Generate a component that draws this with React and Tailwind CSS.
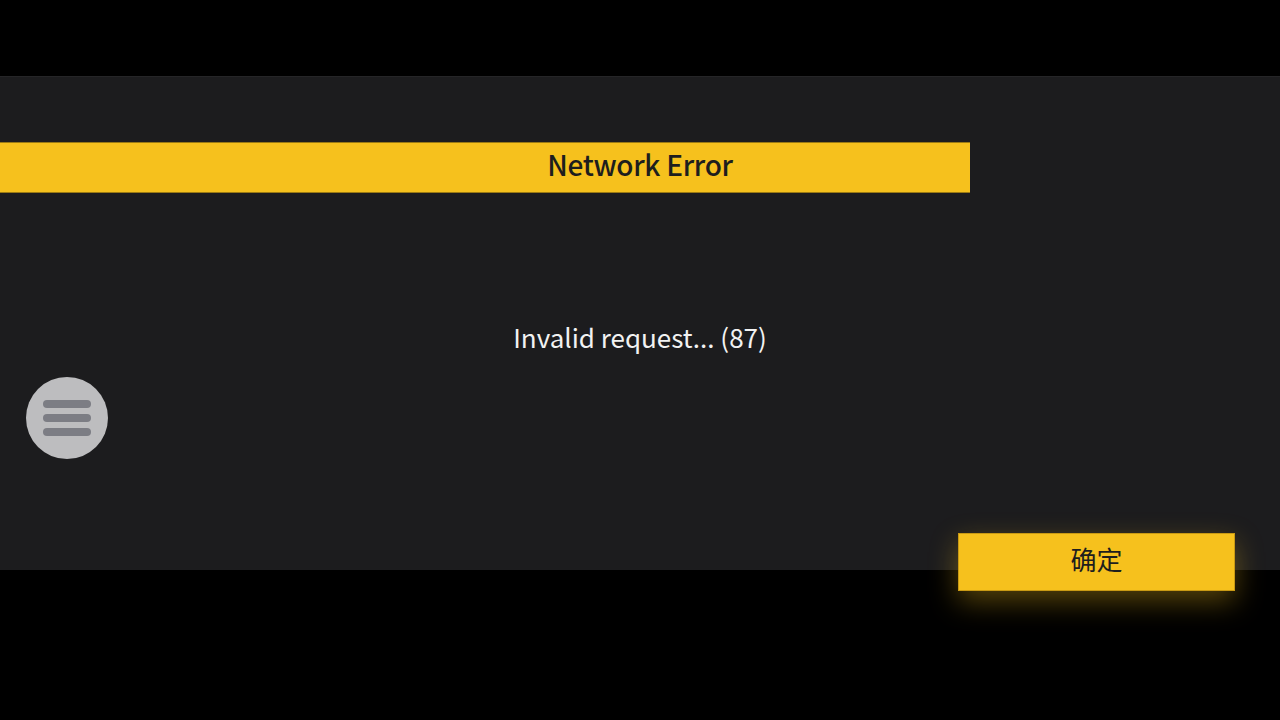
export default function App() {
  const font = { fontFamily: '"Noto Sans CJK SC", "Noto Sans", sans-serif' };
  return (
    <div className="w-[1280px] h-[720px] bg-black overflow-hidden flex flex-col" style={font}>
      <div className="h-[76px] shrink-0" />
      <div className="relative h-[494px] shrink-0 bg-[#1c1c1e] border-t border-[#252527] flex flex-col">
        <div className="mt-[65px] w-[970px] h-[51px] bg-[#f6c11d] border-y border-[#9b7a14] overflow-hidden shrink-0">
          <div className="w-[1280px] h-full flex items-center justify-center pb-[7px] text-[28px] leading-[34px] font-medium text-[#1e1e1e] tracking-[-0.3px]">
            Network Error
          </div>
        </div>
        <div className="mt-[127px] text-center text-[26px] leading-[34px] text-[#f2f2f2]">
          Invalid request... (87)
        </div>
        <div className="flex-1" />
        <div className="flex justify-end pr-[45px] -mb-[21px]">
          <button className="w-[277px] h-[58px] bg-[#f6c11d] border border-[#c99a14] flex items-center justify-center pb-[7px] text-[26px] leading-[34px] text-[#1e1e1e] shadow-[0_10px_28px_rgba(246,193,29,0.35)]">
            确定
          </button>
        </div>
        <button className="absolute left-[26px] top-[300px] w-[82px] h-[82px] rounded-full bg-[#bdbdbf] flex flex-col items-center justify-center gap-[6px]">
          <span className="w-[48px] h-[8px] rounded-full bg-[#7c7d84]" />
          <span className="w-[48px] h-[8px] rounded-full bg-[#7c7d84]" />
          <span className="w-[48px] h-[8px] rounded-full bg-[#7c7d84]" />
        </button>
      </div>
    </div>
  );
}
